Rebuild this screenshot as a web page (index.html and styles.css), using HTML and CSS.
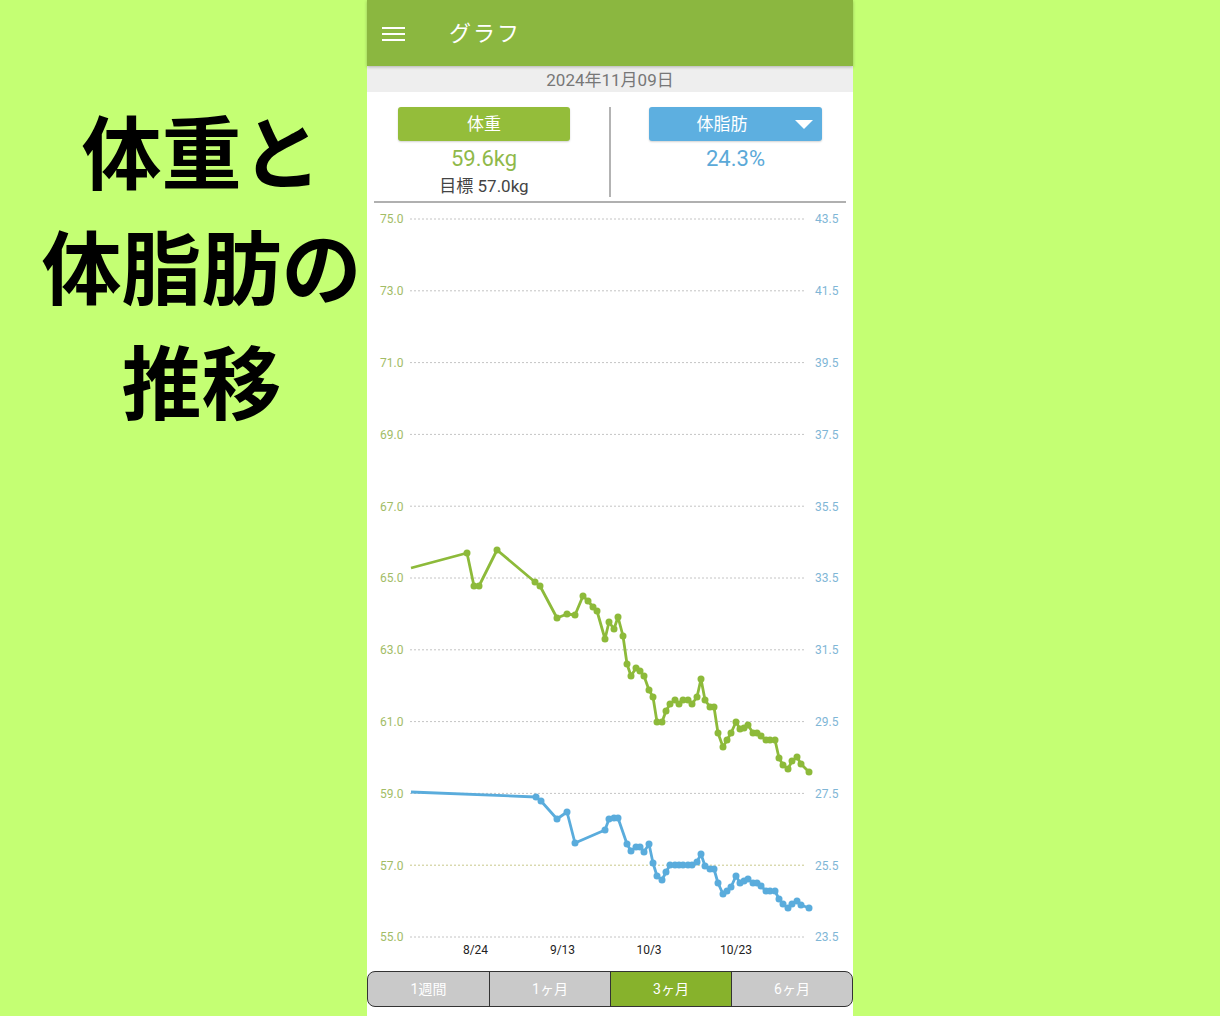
FILE: index.html
```html
<!DOCTYPE html>
<html lang="ja">
<head>
<meta charset="utf-8">
<title>グラフ</title>
<link rel="stylesheet" href="styles.css">
</head>
<body>
<div class="page">
  <div class="intro">
    <div class="intro-line">体重と</div>
    <div class="intro-line">体脂肪の</div>
    <div class="intro-line">推移</div>
  </div>
  <div class="phone">
    <header class="appbar">
      <svg class="menu" width="23" height="14" viewBox="0 0 23 14">
        <rect x="0" y="0" width="23" height="2" fill="#fff"/>
        <rect x="0" y="6" width="23" height="2" fill="#fff"/>
        <rect x="0" y="12" width="23" height="2" fill="#fff"/>
      </svg>
      <div class="title">グラフ</div>
    </header>
    <div class="datebar">2024年11月09日</div>
    <div class="summary">
      <div class="col">
        <div class="btn btn-green">体重</div>
        <div class="value value-green">59.6kg</div>
        <div class="goal">目標 57.0kg</div>
      </div>
      <div class="divider-wrap"><div class="divider"></div></div>
      <div class="col">
        <div class="btn btn-blue"><span class="btn-label">体脂肪</span><span class="caret"></span></div>
        <div class="value value-blue">24.3%</div>
      </div>
    </div>
    <div class="rule"></div>
    <div class="chart">
      <svg width="486" height="768" viewBox="367 203 486 768">
        <defs>
          <marker id="dg" markerUnits="userSpaceOnUse" markerWidth="9" markerHeight="9" refX="4.5" refY="4.5">
            <circle cx="4.5" cy="4.5" r="3.5" fill="#8DBA3A"/>
          </marker>
          <marker id="db" markerUnits="userSpaceOnUse" markerWidth="9" markerHeight="9" refX="4.5" refY="4.5">
            <circle cx="4.5" cy="4.5" r="3.5" fill="#5AACDC"/>
          </marker>
        </defs>
        <g class="grid">
          <line x1="410" y1="219" x2="806" y2="219"/>
          <line x1="410" y1="290.8" x2="806" y2="290.8"/>
          <line x1="410" y1="362.6" x2="806" y2="362.6"/>
          <line x1="410" y1="434.4" x2="806" y2="434.4"/>
          <line x1="410" y1="506.2" x2="806" y2="506.2"/>
          <line x1="410" y1="578" x2="806" y2="578"/>
          <line x1="410" y1="649.8" x2="806" y2="649.8"/>
          <line x1="410" y1="721.6" x2="806" y2="721.6"/>
          <line x1="410" y1="793.4" x2="806" y2="793.4"/>
          <line x1="410" y1="937" x2="806" y2="937"/>
        </g>
        <line class="target" x1="410" y1="865.2" x2="806" y2="865.2"/>
        <g class="ylab-left">
          <text x="380" y="223.3">75.0</text>
          <text x="380" y="295.1">73.0</text>
          <text x="380" y="366.9">71.0</text>
          <text x="380" y="438.7">69.0</text>
          <text x="380" y="510.5">67.0</text>
          <text x="380" y="582.3">65.0</text>
          <text x="380" y="654.1">63.0</text>
          <text x="380" y="725.9">61.0</text>
          <text x="380" y="797.7">59.0</text>
          <text x="380" y="869.5">57.0</text>
          <text x="380" y="941.3">55.0</text>
        </g>
        <g class="ylab-right">
          <text x="815" y="223.3">43.5</text>
          <text x="815" y="295.1">41.5</text>
          <text x="815" y="366.9">39.5</text>
          <text x="815" y="438.7">37.5</text>
          <text x="815" y="510.5">35.5</text>
          <text x="815" y="582.3">33.5</text>
          <text x="815" y="654.1">31.5</text>
          <text x="815" y="725.9">29.5</text>
          <text x="815" y="797.7">27.5</text>
          <text x="815" y="869.5">25.5</text>
          <text x="815" y="941.3">23.5</text>
        </g>
        <g class="xlab">
          <text x="475.5" y="954">8/24</text>
          <text x="562.5" y="954">9/13</text>
          <text x="649" y="954">10/3</text>
          <text x="736" y="954">10/23</text>
        </g>
        <polyline class="line-green" marker-mid="url(#dg)" marker-end="url(#dg)" points="411,568 467,553 474,586 479,586 497,550 535,582 540,586 557,618 567,614 575,615 583,596 588,601 593,607 597,611 605,639 609,622 614,629 618,617 623,636 627,664 631,676 636,668 640,671 644,676 649,690 653,697 657,722 662,722 666,711 670,704 675,700 679,704 683,700 688,700 692,704 697,697 701,679 705,700 710,707 714,707 718,733 723,747 727,740 731,733 736,722 740,729 744,728 748,725 753,733 757,733 761,736 766,740 770,740 775,740 779,758 783,765 788,769 792,761 797,757 801,764 809,772"/>
        <polyline class="line-blue" marker-mid="url(#db)" marker-end="url(#db)" points="411,792 536,797 541,801 557,819 567,812 575,843 605,830 609,819 614,818 618,818 627,844 631,851 636,847 640,847 644,852 649,844 653,863 657,876 662,880 666,872 670,865 675,865 679,865 683,865 688,865 692,865 697,862 701,854 705,866 710,869 714,869 718,883 723,894 727,891 731,887 736,876 740,883 744,881 748,879 753,883 757,883 761,886 766,891 770,891 775,891 779,899 783,904 788,908 792,904 797,901 801,905 809,908"/>
      </svg>
    </div>
    <div class="tabs">
      <div class="tab">1週間</div>
      <div class="tab">1ヶ月</div>
      <div class="tab tab-active">3ヶ月</div>
      <div class="tab">6ヶ月</div>
    </div>
  </div>
</div>
</body>
</html>
```
FILE: styles.css
```css
html, body {
  margin: 0;
  padding: 0;
}
body {
  width: 1220px;
  height: 1016px;
  overflow: hidden;
  background: #C4FF73;
  font-family: Roboto, "Noto Sans CJK JP", sans-serif;
}
.page {
  display: flex;
  height: 1016px;
}
.intro {
  width: 367px;
  flex: none;
  box-sizing: border-box;
  padding: 91px 0 0 36px;
  text-align: center;
}
.intro-line {
  font-family: "Noto Sans CJK JP", sans-serif;
  font-weight: 700;
  font-size: 80px;
  line-height: 115px;
  color: #000;
  white-space: nowrap;
}
.phone {
  width: 486px;
  flex: none;
  background: #fff;
  height: 1016px;
  display: flex;
  flex-direction: column;
}
.appbar {
  height: 66px;
  flex: none;
  background: #8BB740;
  display: flex;
  align-items: center;
  position: relative;
  z-index: 1;
  box-shadow: 0 1px 3px rgba(0,0,0,0.25);
}
.menu {
  margin-left: 15px;
  margin-top: 1px;
  display: block;
}
.title {
  margin-left: 44px;
  color: #fff;
  font-size: 22px;
  letter-spacing: 2px;
  line-height: 30px;
  padding-top: 2px;
}
.datebar {
  height: 26px;
  flex: none;
  box-sizing: border-box;
  padding-top: 2px;
  background: #EEEEEE;
  color: #777;
  font-size: 17px;
  line-height: 24px;
  text-align: center;
}
.summary {
  height: 109px;
  flex: none;
  box-sizing: border-box;
  padding: 15px 31px 0;
  display: grid;
  grid-template-columns: 172px 1fr 173px;
}
.col {
  display: flex;
  flex-direction: column;
  align-items: center;
}
.btn {
  width: 100%;
  height: 34px;
  border-radius: 3px;
  color: #fff;
  font-size: 17px;
  line-height: 35px;
  text-align: center;
  box-shadow: 0 1px 2px rgba(0,0,0,0.18);
}
.btn-green {
  background: #94BD3A;
}
.btn-blue {
  background: #5DAFE0;
  display: flex;
  align-items: center;
}
.btn-label {
  flex: 1;
  text-align: center;
}
.caret {
  width: 0;
  height: 0;
  border-left: 9px solid transparent;
  border-right: 9px solid transparent;
  border-top: 9px solid #fff;
  margin: 1px 9px 0 0;
}
.value {
  font-size: 22px;
  line-height: 28px;
  margin-top: 4px;
}
.value-green {
  color: #8FB94A;
}
.value-blue {
  color: #5BA9D8;
}
.goal {
  font-size: 17px;
  line-height: 22px;
  margin-top: 2px;
  color: #444;
}
.divider-wrap {
  display: flex;
  justify-content: center;
}
.divider {
  width: 2px;
  height: 90px;
  background: #B3B3B3;
  margin-left: 1px;
}
.rule {
  height: 2px;
  flex: none;
  margin: 0 7px;
  background: #B0B0B0;
}
.chart {
  height: 768px;
  flex: none;
}
.chart svg {
  display: block;
}
.grid line {
  stroke: #C4C4C4;
  stroke-width: 1;
  stroke-dasharray: 2 2;
}
.target {
  stroke: #C9C98A;
  stroke-width: 1;
  stroke-dasharray: 2 2;
}
.ylab-left text,
.ylab-right text,
.xlab text {
  font-family: Roboto, sans-serif;
  font-size: 12px;
}
.ylab-left text {
  fill: #A2BC66;
}
.ylab-right text {
  fill: #7FB6D6;
}
.xlab text {
  fill: #222;
  text-anchor: middle;
}
.line-green,
.line-blue {
  fill: none;
  stroke-width: 2.8;
  stroke-linejoin: round;
}
.line-green {
  stroke: #8DBA3A;
}
.line-blue {
  stroke: #5AACDC;
}
.tabs {
  height: 34px;
  flex: none;
  box-sizing: content-box;
  border: 1.5px solid #333;
  border-radius: 8px;
  overflow: hidden;
  display: grid;
  grid-template-columns: repeat(4, 1fr);
  background: #C9C9C9;
}
.tab {
  color: #fff;
  font-size: 14px;
  line-height: 34px;
  text-align: center;
  border-left: 1.5px solid #333;
}
.tab:first-child {
  border-left: none;
}
.tab-active {
  background: #87B22C;
}
```
